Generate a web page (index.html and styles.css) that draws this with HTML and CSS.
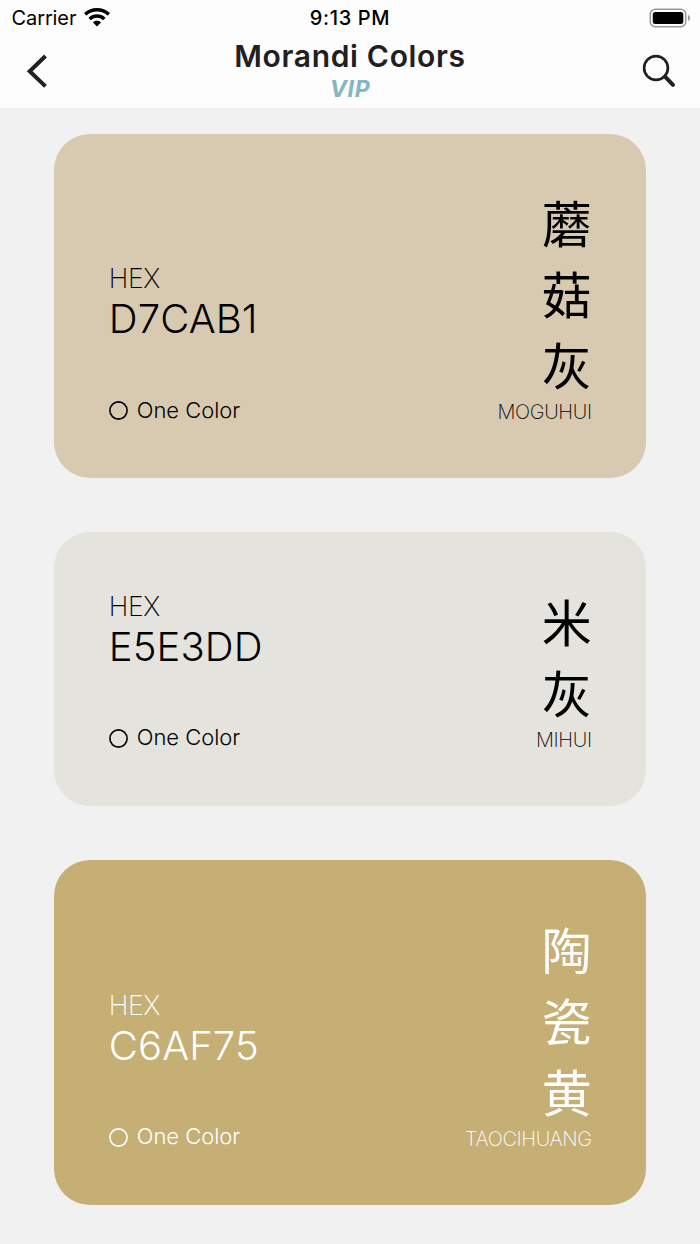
FILE: index.html
```html
<!DOCTYPE html>
<html lang="en">
<head>
<meta charset="utf-8">
<title>Morandi Colors</title>
<link rel="stylesheet" href="styles.css">
</head>
<body>
<header class="header">
  <div class="status">
    <div class="carrier"><span class="carrier-name">Carrier</span>
      <svg class="wifi" width="26" height="19" viewBox="0 0 26 19"><path d="M13 0C8 0 3.700 1.700 .4 4.800Q0 5.200 .4 5.600L2 7.200Q2.400 7.600 2.900 7.200C5.600 4.800 9 3.500 13 3.500s7.400 1.300 10.100 3.700Q23.600 7.600 24 7.200L25.600 5.600Q26 5.200 25.600 4.800C22.300 1.700 18 0 13 0zM13 6.300c-3.200 0-6.100 1.200-8.200 3.100Q4.400 9.800 4.800 10.200L6.500 11.900Q6.900 12.300 7.300 11.900C8.900 10.500 10.800 9.800 13 9.800s4.100.7 5.700 2.100Q19.100 12.300 19.500 11.900L21.200 10.200Q21.600 9.800 21.200 9.400C19.100 7.500 16.200 6.300 13 6.300zM13 12.700c-1.400 0-2.700.5-3.700 1.300Q8.900 14.400 9.300 14.800L12.500 18Q13 18.500 13.500 18L16.700 14.800Q17.100 14.400 16.700 14C15.700 13.200 14.400 12.700 13 12.700z"/></svg>
    </div>
    <div class="time">9:13 PM</div>
    <svg class="battery" width="42" height="20" viewBox="0 0 42 20"><rect x="1.250" y="1.250" width="35.500" height="17.500" rx="5" fill="none" stroke="#999" stroke-width="1.500"/><rect x="3.800" y="4" width="30.500" height="12" rx="2.500"/><path d="M39 7c2.600 1 2.600 5 0 6z" fill="#999"/></svg>
  </div>
  <div class="nav">
    <svg class="back" width="22" height="34" viewBox="0 0 22 34"><path d="M19.500 2L3.700 17.200l15.800 15.200" fill="none" stroke="#202022" stroke-width="4"/></svg>
    <div class="titles"><h1 class="title">Morandi Colors</h1><div class="vip">VIP</div></div>
    <svg class="search" width="34" height="34" viewBox="0 0 34 34"><circle cx="14" cy="14" r="11.900" fill="none" stroke="#202022" stroke-width="2.700"/><path d="M23 22.700l8 8.200" stroke="#202022" stroke-width="4" stroke-linecap="round"/></svg>
  </div>
</header>
<main class="cards">
  <section class="card tall mushroom">
    <div class="info"><div class="label">HEX</div><div class="hex">D7CAB1</div><div class="kind"><svg class="ring" width="19" height="19" viewBox="0 0 19 19"><circle cx="9.500" cy="9.500" r="8.600"/></svg><span class="kind-text">One Color</span></div></div>
    <div class="name"><div class="hanzi"><span>蘑</span><span>菇</span><span>灰</span></div><div class="pinyin">MOGUHUI</div></div>
  </section>
  <section class="card short rice">
    <div class="info"><div class="label">HEX</div><div class="hex">E5E3DD</div><div class="kind"><svg class="ring" width="19" height="19" viewBox="0 0 19 19"><circle cx="9.500" cy="9.500" r="8.600"/></svg><span class="kind-text">One Color</span></div></div>
    <div class="name"><div class="hanzi"><span>米</span><span>灰</span></div><div class="pinyin">MIHUI</div></div>
  </section>
  <section class="card tall ceramic">
    <div class="info"><div class="label">HEX</div><div class="hex">C6AF75</div><div class="kind"><svg class="ring" width="19" height="19" viewBox="0 0 19 19"><circle cx="9.500" cy="9.500" r="8.600"/></svg><span class="kind-text">One Color</span></div></div>
    <div class="name"><div class="hanzi"><span>陶</span><span>瓷</span><span>黄</span></div><div class="pinyin">TAOCIHUANG</div></div>
  </section>
</main>
</body>
</html>
```
FILE: styles.css
```css
* { box-sizing: border-box; }
body { margin: 0; height: 1244px; overflow: hidden; background: #f1f1f1; color: #000; font-family: Inter, "Noto Sans CJK SC", sans-serif; }
svg { display: block; flex: none; }
.header { height: 108px; background: #fdfdfd; }
.status { height: 35px; padding: 0 9px; display: grid; grid-template-columns: 1fr auto 1fr; align-items: center; font-size: 20px; line-height: 36px; }
.carrier { display: flex; align-items: center; gap: 8px; padding-left: 2.500px; }
.carrier-name { letter-spacing: -0.1px; }
.wifi { margin-bottom: 1px; }
.time { font-weight: 500; letter-spacing: .65px; }
.battery { justify-self: end; }
.nav { height: 73px; padding: 0 24px; display: grid; grid-template-columns: 1fr auto 1fr; color: #202022; }
.back { margin: 19px 0 0 2px; }
.search { margin-top: 19px; justify-self: end; }
.titles { text-align: center; padding-top: 1px; }
.title { margin: 0; font-size: 30px; line-height: 41px; font-weight: 600; letter-spacing: .67px; }
.vip { color: #82b6c2; font-size: 23px; line-height: 24px; font-weight: 700; font-style: italic; letter-spacing: .6px; }
.cards { padding: 25.7px 54.3px 0; display: flex; flex-direction: column; gap: 54.2px; }
.card { flex: none; border-radius: 36px; padding: 0 54px 52px 54.500px; display: flex; justify-content: space-between; align-items: flex-end; }
.tall { height: 344.500px; }
.short { height: 273.600px; }
.mushroom { background: #d7cab1; }
.rice { background: #e4e3dd; }
.ceramic { background: #c5af75; color: #fff; }
.info { padding-bottom: 1px; }
.label { font-size: 26.500px; line-height: 32px; font-weight: 200; letter-spacing: -.3px; }
.hex { font-size: 40px; line-height: 50px; font-weight: 300; letter-spacing: .1px; }
.kind { margin-top: 50px; display: flex; align-items: center; gap: 9px; height: 31px; }
.ring { margin-top: 2px; fill: none; stroke: currentColor; stroke-width: 1.6px; }
.kind-text { font-size: 22px; line-height: 32px; font-weight: 300; letter-spacing: -.05px; }
.name { display: flex; flex-direction: column; align-items: flex-end; }
.hanzi { display: flex; flex-direction: column; font-family: "Noto Sans CJK SC", sans-serif; font-size: 50px; margin-bottom: -1px; }
.hanzi span { display: block; height: 71px; line-height: 71px; }
.pinyin { font-size: 20px; line-height: 28px; font-weight: 200; letter-spacing: -.35px; }
```
